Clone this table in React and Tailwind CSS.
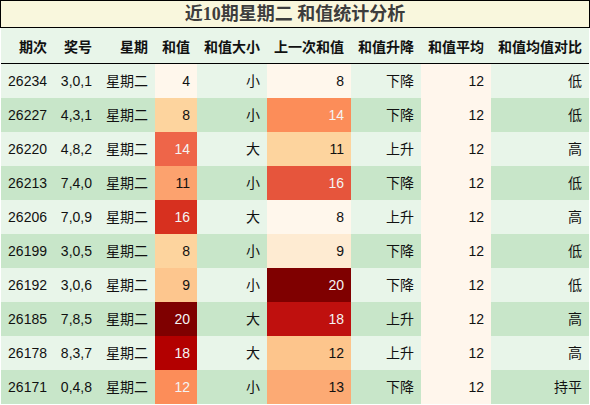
import React from 'react';

const rows = [
  ['26234', '3,0,1', 4, '小', 8, '下降', '低'],
  ['26227', '4,3,1', 8, '小', 14, '下降', '低'],
  ['26220', '4,8,2', 14, '大', 11, '上升', '高'],
  ['26213', '7,4,0', 11, '小', 16, '下降', '低'],
  ['26206', '7,0,9', 16, '大', 8, '上升', '高'],
  ['26199', '3,0,5', 8, '小', 9, '下降', '低'],
  ['26192', '3,0,6', 9, '小', 20, '下降', '低'],
  ['26185', '7,8,5', 20, '大', 18, '上升', '高'],
  ['26178', '8,3,7', 18, '大', 12, '上升', '高'],
  ['26171', '0,4,8', 12, '小', 13, '下降', '持平'],
];

// OrRd-ish heat colours, looked up per value
const sumColor = {
  4: 'bg-[#fff7ec] text-[#111]',
  8: 'bg-[#fdd49e] text-[#111]',
  9: 'bg-[#fdc68e] text-[#111]',
  11: 'bg-[#fca26e] text-[#111]',
  12: 'bg-[#fc8d59] text-[#f4f4f4]',
  14: 'bg-[#ee6549] text-[#f4f4f4]',
  16: 'bg-[#d7301f] text-[#f4f4f4]',
  18: 'bg-[#b30000] text-[#f4f4f4]',
  20: 'bg-[#7f0000] text-[#f4f4f4]',
};

const prevColor = {
  8: 'bg-[#fff7ec] text-[#111]',
  9: 'bg-[#feebd2] text-[#111]',
  11: 'bg-[#fdd49e] text-[#111]',
  12: 'bg-[#fdc58c] text-[#111]',
  13: 'bg-[#fcaa74] text-[#111]',
  14: 'bg-[#fc8d59] text-[#f4f4f4]',
  16: 'bg-[#e6553c] text-[#f4f4f4]',
  18: 'bg-[#bf100e] text-[#f4f4f4]',
  20: 'bg-[#7f0000] text-[#f4f4f4]',
};

const headers = ['期次', '奖号', '星期', '和值', '和值大小', '上一次和值', '和值升降', '和值平均', '和值均值对比'];

const cols = 'grid grid-cols-[53px_45px_56px_42px_70px_84px_70px_70px_98px]';

const App = () => {
  return (
    <div className="w-[590px] h-[405px] bg-white overflow-hidden font-['Liberation_Sans','Noto_Sans_CJK_SC',sans-serif] text-[14px]">
      {/* Title */}
      <div className="h-[28px] border border-black bg-[#f9f7dd] flex items-center justify-center">
        <span className="font-['Liberation_Serif','Noto_Sans_CJK_SC',serif] font-bold text-[18px] text-[#3d3d3d] leading-none">
          近10期星期二 和值统计分析
        </span>
      </div>

      {/* Table */}
      <div className="px-[1px]">
        <div className={`${cols} h-[36px] bg-[#e8f5e9] border-b border-black font-bold text-[#111]`}>
          {headers.map((h) => (
            <div key={h} className="flex items-center justify-end pr-[7px] pt-[3px] whitespace-nowrap">
              {h}
            </div>
          ))}
        </div>

        {rows.map((r, i) => {
          const stripe = i % 2 === 0 ? 'bg-[#e8f5e9]' : 'bg-[#c8e6c9]';
          const cell = 'flex items-center justify-end pr-[7px] whitespace-nowrap';
          return (
            <div key={r[0]} className={`${cols} h-[34px] text-[#111]`}>
              <div className={`${cell} ${stripe}`}>{r[0]}</div>
              <div className={`${cell} ${stripe}`}>{r[1]}</div>
              <div className={`${cell} ${stripe}`}>星期二</div>
              <div className={`${cell} ${sumColor[r[2]]}`}>{r[2]}</div>
              <div className={`${cell} ${stripe}`}>{r[3]}</div>
              <div className={`${cell} ${prevColor[r[4]]}`}>{r[4]}</div>
              <div className={`${cell} ${stripe}`}>{r[5]}</div>
              <div className={`${cell} bg-[#fff6ec]`}>12</div>
              <div className={`${cell} ${stripe}`}>{r[6]}</div>
            </div>
          );
        })}
      </div>
    </div>
  );
};

export default App;
